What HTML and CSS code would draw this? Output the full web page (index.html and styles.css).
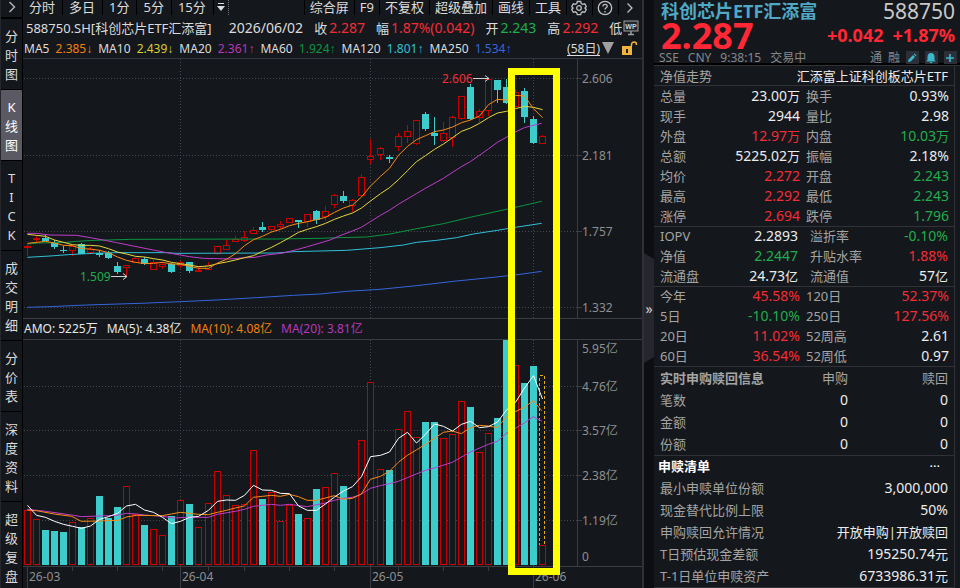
FILE: index.html
```html
<!DOCTYPE html>
<html lang="zh-CN">
<head>
<meta charset="utf-8">
<title>588750.SH 科创芯片ETF汇添富</title>
<link rel="stylesheet" href="styles.css">
</head>
<body>
<div class="app">
  <nav class="side">
    <button class="side-toggle" aria-label="展开"><svg width="8" height="12" viewBox="0 0 8 12"><path d="M1.5 1 6.500 6 1.500 11" /></svg></button>
    <button>分<br>时<br>图</button>
    <button class="active">K<br>线<br>图</button>
    <button>T<br>I<br>C<br>K</button>
    <button>成<br>交<br>明<br>细</button>
    <button>分<br>价<br>表</button>
    <button>深<br>度<br>资<br>料</button>
    <button>超<br>级<br>复<br>盘</button>
  </nav>

  <main class="main">
    <div class="toolbar">
      <div class="periods">
        <button>分时</button><button>多日</button><button>1分</button><button>5分</button><button>15分</button>
        <button class="more" aria-label="更多周期"><svg width="8" height="9" viewBox="0 0 8 9"><path d="M1 0h6v1H1zM0 3h8L4 8z" /></svg></button>
      </div>
      <div class="tools">
        <button>综合屏</button><button>F9</button><button>不复权</button><button>超级叠加</button><button>画线</button><button>工具</button>
        <button class="icon" aria-label="设置"><svg width="16" height="16" viewBox="0 0 16 16"><path d="M6.300 1.500h3.400l.6 2 1.400.8 2-.5 1.600 2.800-1.400 1.400 1.400 1.500-1.600 2.800-2-.5-1.400.8-.6 2H6.300l-.6-2-1.400-.8-2 .5L.7 9.500 2.100 8 .7 6.600l1.600-2.800 2 .5 1.400-.8z" /><circle cx="8" cy="8" r="2.300" /></svg></button>
        <button class="icon" aria-label="帮助"><svg width="16" height="16" viewBox="0 0 16 16"><circle cx="8" cy="8" r="6.700" /><path d="M6 6.500C6 3.600 10.200 3.800 10.200 6.300 10.200 7.900 8 7.800 8 9.600M8 11v1.400" /></svg></button>
        <button class="icon" aria-label="下一页"><svg width="8" height="16" viewBox="0 0 8 16"><path d="M1.500 3.500 6 8l-4.500 4.500" /></svg></button>
      </div>
    </div>

    <div class="quote">
      <span class="code">588750.SH[科创芯片ETF汇添富]</span>
      <span class="num">2026/06/02</span>
      <span>收<b class="up">2.287</b></span>
      <span>幅<b class="up">1.87%(0.042)</b></span>
      <span>开<b class="down">2.243</b></span>
      <span>高<b class="up">2.292</b></span>
      <span>低</span>
      <svg class="wp" width="16" height="16" viewBox="0 0 16 16"><rect x="1" y="1" width="14" height="10" /><path d="M5 14.500h6M8 11v3" /><text x="8" y="9">WP</text></svg>
    </div>
    <div class="averages">
      <span>MA5 <i class="c-orange">2.385<s>↓</s></i></span>
      <span>MA10 <i class="c-yellow">2.439<s>↓</s></i></span>
      <span>MA20 <i class="c-purple">2.361<s>↑</s></i></span>
      <span>MA60 <i class="c-green">1.924<s>↑</s></i></span>
      <span>MA120 <i class="c-cyan">1.801<s>↑</s></i></span>
      <span>MA250 <i class="c-blue">1.534<s>↑</s></i></span>
      <div class="range">
        <a href="#range">(58日)</a>
        <svg width="12" height="12" viewBox="0 0 12 12"><path d="M0 0h12L6 12z" fill="#a0a0a0" /></svg>
        <svg class="lock" width="16" height="14" viewBox="0 0 16 14"><path d="M0 5h10v9H0z" fill="#f0b33c" /><path d="M9.500 5V3.500a2.500 2.500 0 0 1 5 0V4" fill="none" stroke="#f0b33c" stroke-width="1.500" /><path d="M4 8h2v4H4z" fill="#222" /></svg>
      </div>
    </div>

    <div class="charts">
      <svg id="price" viewBox="23 59 619 259"></svg>
      <div class="amo">
        <span>AMO: 5225万</span><span>MA(5): 4.38亿</span><span class="c-orange">MA(10): 4.08亿</span><span class="c-purple">MA(20): 3.81亿</span>
      </div>
      <svg id="volume" viewBox="23 340 619 248"></svg>
      <div class="highlight"></div>
    </div>
  </main>

  <div class="splitter"><button aria-label="收起">»</button></div>

  <aside class="panel">
    <header class="head">
      <div class="line"><h1>科创芯片ETF汇添富</h1><span class="ticker">588750</span></div>
      <div class="line price-line"><strong class="last">2.287</strong><span class="change"><b>+0.042</b><b>+1.87%</b></span></div>
      <div class="line status">
        <span class="tags"><span>SSE</span><span>CNY</span><span>9:38:15</span><span>交易中</span></span>
        <span class="marks"><span>通</span><span>融</span>
          <button aria-label="编辑"><svg width="12" height="12" viewBox="0 0 12 12"><path d="M2 10l.6-2.600L7 3l2 2-4.400 4.400zM7.700 2.300l.8-.8 2 2-.8.800z" /></svg></button>
          <button aria-label="提醒"><svg width="12" height="12" viewBox="0 0 12 12"><path d="M6 1c2.500 0 3.500 1.800 3.500 4v3l1 1v.600h-9V9l1-1V5C2.500 2.800 3.500 1 6 1zM4.500 10h3l-.7 1H5.200z" /></svg></button>
          <button aria-label="添加"><svg width="12" height="12" viewBox="0 0 12 12"><path d="M5.200 2h1.600v3.200H10v1.600H6.800V10H5.200V6.800H2V5.200h3.200z" /></svg></button>
        </span>
      </div>
    </header>
    <div class="body">
      <div class="line trend"><span>净值走势</span><span class="white">汇添富上证科创板芯片ETF</span></div>
      <table class="pairs">
        <tr><th>总量</th><td>23.00<u>万</u></td><th>换手</th><td>0.93%</td></tr>
        <tr><th>现手</th><td>2944</td><th>量比</th><td>2.98</td></tr>
        <tr><th>外盘</th><td class="up">12.97<u>万</u></td><th>内盘</th><td class="down">10.03<u>万</u></td></tr>
        <tr><th>总额</th><td>5225.02<u>万</u></td><th>振幅</th><td>2.18%</td></tr>
        <tr><th>均价</th><td class="up">2.272</td><th>开盘</th><td class="down">2.243</td></tr>
        <tr><th>最高</th><td class="up">2.292</td><th>最低</th><td class="down">2.243</td></tr>
        <tr><th>涨停</th><td class="up">2.694</td><th>跌停</th><td class="down">1.796</td></tr>
      </table>
      <table class="pairs inset">
        <tr><th>IOPV</th><td>2.2893</td><th>溢折率</th><td class="down">-0.10%</td></tr>
        <tr><th>净值</th><td class="down">2.2447</td><th>升贴水率</th><td class="up">1.88%</td></tr>
        <tr><th>流通盘</th><td>24.73<u>亿</u></td><th>流通值</th><td>57<u>亿</u></td></tr>
      </table>
      <table class="pairs">
        <tr><th>今年</th><td class="up">45.58%</td><th>120日</th><td class="up">52.37%</td></tr>
        <tr><th>5日</th><td class="down">-10.10%</td><th>250日</th><td class="up">127.56%</td></tr>
        <tr><th>20日</th><td class="up">11.02%</td><th>52周高</th><td>2.61</td></tr>
        <tr><th>60日</th><td class="up">36.54%</td><th>52周低</th><td>0.97</td></tr>
      </table>
      <table class="flows">
        <tr><th class="strong">实时申购赎回信息</th><th class="r">申购</th><th class="r">赎回</th></tr>
        <tr><th>笔数</th><td>0</td><td>0</td></tr>
        <tr><th>金额</th><td>0</td><td>0</td></tr>
        <tr><th>份额</th><td>0</td><td>0</td></tr>
      </table>
      <div class="line list-head"><h2>申赎清单</h2><button aria-label="更多">···</button></div>
      <table class="list">
        <tr><th>最小申赎单位份额</th><td>3,000,000</td></tr>
        <tr><th>现金替代比例上限</th><td>50%</td></tr>
        <tr><th>申购赎回允许情况</th><td><u>开放申购|开放赎回</u></td></tr>
        <tr><th>T日预估现金差额</th><td>195250.74<u>元</u></td></tr>
        <tr><th>T-1日单位申赎资产</th><td>6733986.31<u>元</u></td></tr>
      </table>
    </div>
  </aside>
</div>
<script src="script.js"></script>
</body>
</html>
```
FILE: styles.css
```css
* { box-sizing: border-box; }
body {
  margin: 0;
  background: #14171c;
  color: #dcdcdc;
  font: 13px/19px "Noto Sans", "Noto Sans CJK SC", sans-serif;
  overflow: hidden;
}
button {
  margin: 0;
  padding: 0;
  border: 0;
  background: none;
  color: inherit;
  font: inherit;
  white-space: nowrap;
}
svg { display: block; }
b, i, s, u { font-weight: normal; font-style: normal; text-decoration: none; }

.app {
  display: grid;
  grid-template-columns: 23px minmax(0, 1fr) 12px 306px;
  height: 100vh;
  overflow: hidden;
}

/* left tabs */
.side {
  display: flex;
  flex-direction: column;
  border-left: 1px solid #25272c;
  border-right: 1px solid #000;
}
.side button {
  flex: none;
  padding: 8px 0 5px;
  border-bottom: 1px solid #000;
}
.side .side-toggle {
  display: flex;
  justify-content: center;
  height: 19px;
  padding: 1px 0 0;
  border-bottom-width: 2px;
}
.side-toggle svg { fill: none; stroke: #b0b0b0; stroke-width: 1.5; }
.side .active { background: #5a5964; color: #fff; }

/* toolbar */
.toolbar {
  display: flex;
  justify-content: space-between;
  height: 17px;
}
.periods, .tools { display: flex; }
.toolbar button {
  height: 15px;
  line-height: 15px;
  padding: 0 7px 0 6px;
  border-right: 1px solid #000;
}
.tools button { padding: 0 5px; }
.tools button:first-child { border-left: 1px solid #000; }
.tools button:last-child { border-right: 0; padding: 0 8px 0 7px; }
.toolbar .more { padding: 0 3px; border-right: 1px dotted #777; }
.more svg { fill: #dcdcdc; }
.icon svg { fill: none; stroke: #c0c0c0; stroke-width: 1.3; }
.tools .icon { padding: 0 5px 0 4px; }

/* quote rows */
.quote, .averages {
  position: relative;
  display: flex;
  white-space: nowrap;
}
.quote { height: 22px; line-height: 22px; gap: 11px; padding-left: 3px; }
.quote .num { font-size: 14px; margin-left: 6px; }
.quote b { font-size: 14px; margin-left: 2px; }
.wp { position: absolute; right: 3px; top: 3px; }
.wp rect { fill: #26282d; stroke: #a0a0a0; }
.wp path { stroke: #a0a0a0; stroke-width: 1.5; }
.wp text { fill: #d0d0d0; font: bold 7px "Liberation Sans", sans-serif; text-anchor: middle; }
.averages {
  height: 20px;
  gap: 6px;
  padding-left: 1px;
  border-bottom: 1px solid #33353c;
  font-size: 12px;
  line-height: 19px;
}
.averages i { margin-left: 3px; }
.averages s { font-family: "Liberation Sans", sans-serif; }
.range { display: flex; gap: 2px; margin-left: auto; padding-right: 4px; }
.range svg { margin-top: 3px; }
.range .lock { margin: 2px 0 0 6px; }
.range a { color: inherit; text-underline-offset: 2px; }

.up { color: #f42c36; }
.down { color: #1fae4b; }
.c-orange { color: #f08010; }
.c-yellow { color: #d6cf30; }
.c-purple { color: #b838b8; }
.c-green { color: #0c9440; }
.c-cyan { color: #30c0d8; }
.c-blue { color: #3565dc; }

/* charts */
.charts { position: relative; }
.charts svg { width: 100%; height: auto; }
.amo {
  display: flex;
  gap: 9px;
  height: 22px;
  padding-left: 1px;
  border-top: 1px solid #3a3c42;
  border-bottom: 1px solid #3a3c42;
  font-size: 12px;
  line-height: 20px;
  white-space: nowrap;
  color: #e8e8e8;
}
.amo .c-orange { color: #f08010; }
.amo .c-purple { color: #b838b8; }
.highlight {
  position: absolute;
  left: 78.35%;
  top: 9px;
  width: 8.4%;
  height: 507px;
  border: 7px solid #ff0;
}
.charts text { font-size: 12px; fill: #8f8f8f; dominant-baseline: central; }
.charts .t-low { fill: #1fae4b; }
.charts .t-high { fill: #f42c36; }
.grid { stroke: #45484e; stroke-dasharray: 1 2; }
.axis { stroke: #3a3c42; }
.grid, .axis, .wick-up, .wick-down, .bar-up, .bar-down, .estimate { shape-rendering: crispEdges; }
.wick-up { stroke: #c80000; }
.wick-down { stroke: #3ccccc; }
.bar-up { fill: #14171c; stroke: #c80000; }
.bar-down { fill: #3ccccc; }
.estimate { fill: #14171c; stroke: #e8ac10; stroke-dasharray: 3 2; }
.curve { fill: none; stroke-width: 1; }
.arrow { fill: none; stroke: #d0d0d0; }

/* splitter */
.splitter {
  display: flex;
  align-items: center;
  border-left: 2px solid #303038;
  background: #0c0e12;
  padding-top: 24px;
}
.splitter button {
  width: 10px;
  height: 110px;
  background: #26262d;
  clip-path: polygon(0 0, 100% 6px, 100% 104px, 0 100%);
  color: #d0d0d0;
  font-size: 14px;
}

/* right panel */
.line { display: flex; justify-content: space-between; }
.head {
  height: 66px;
  padding: 0 5px 0 7px;
  border-bottom: 1px solid #303238;
  box-shadow: inset 0 -2px #000;
}
h1 { margin: 0; color: #50a8c4; font-size: 18px; line-height: 22px; }
.ticker { font-size: 21px; line-height: 22px; color: #c8c8c8; }
.price-line { height: 28px; color: #ff2834; }
.last { font-size: 36px; line-height: 28px; }
.change { display: flex; gap: 9px; font-size: 18px; line-height: 27px; }
.change b { font-weight: bold; }
.status { height: 15px; line-height: 15px; font-size: 12px; color: #85888c; margin-left: -2px; margin-right: -2px; }
.tags { display: flex; gap: 9px; }
.marks { display: flex; gap: 6px; align-items: center; }
.marks button { width: 13px; height: 13px; background: #2c2f37; }
.marks svg { fill: #3cb8cc; }

.body { margin-right: 5px; border-right: 1px solid #303238; color: #a4a4a2; }
.trend { height: 20px; padding: 0 6px; line-height: 20px; border-bottom: 1px solid #303238; }
.white { color: #ececec; }
table {
  width: 100%;
  border-collapse: separate;
  border-spacing: 0;
  table-layout: fixed;
  border-bottom: 1px solid #303238;
}
th { padding: 0; font-weight: normal; text-align: left; white-space: nowrap; }
td { padding: 0; color: #ececec; font-size: 14px; text-align: right; white-space: nowrap; }
td.up { color: #f42c36; }
td.down { color: #1fae4b; }
u { font-size: 13px; }
tr > :first-child { padding-left: 6px; }
tr > :last-child { padding-right: 5px; }
.pairs { margin-bottom: -1px; }
.pairs tr { height: 20px; line-height: 20px; }
.pairs th:nth-child(3) { padding-left: 6px; }
.pairs th:first-child { width: 60px; }
.pairs td:nth-child(2) { width: 86px; }
.inset td:nth-child(2) { padding-right: 2px; }
.inset th:nth-child(3) { padding-left: 10px; }
.inset td:last-child { padding-right: 6px; }
.flows tr, .list tr { height: 22px; line-height: 22px; }
.flows { padding-top: 1px; }
.flows th:first-child { width: 50%; }
.flows .r { text-align: right; }
.flows tr > :nth-child(2) { padding-right: 5px; width: 49px; }
.strong { font-weight: bold; }
.flows tr > :last-child, .list tr > :last-child { padding-right: 6px; }
.list-head { height: 21px; padding: 0 14px 0 4px; line-height: 21px; color: #fff; }
h2 { margin: 0; font-size: 13px; line-height: 21px; }
.list th { width: 50%; }
```
FILE: script.js
```js
// Chart values are kept in thirds of a viewBox unit.
const candles = [
  ['u',556,558,560,588],['u',524,534,540,548],['d',524,534,544,544],['d',540,546,561,567],['d',557,569,573,579],
  ['u',556,558,572,588],['d',549,552,583,583],['u',560,566,578,578],['d',570,579,584,591],['d',574,579,594,597],
  ['d',606,618,636,642],['u',615,616,623,647],['u',590,595,609,609],['d',592,597,611,615],['u',596,606,629,629],
  ['u',607,611,620,627],['d',608,612,636,639],['u',603,606,617,624],['d',606,606,633,639],['u',619,629,632,632],
  ['u',606,614,629,629],['u',558,559,581,585],['u',540,556,569,569],['u',528,538,545,545],['u',514,532,543,545],
  ['u',501,511,521,521],['d',486,501,510,516],['u',498,499,509,516],['u',483,493,500,506],['u',474,475,488,488],
  ['d',480,480,486,503],['u',462,463,487,501],['d',450,453,479,491],['u',438,454,470,483],['u',402,406,434,444],
  ['d',393,408,423,429],['u',417,421,437,456],['u',342,352,407,411],['u',238,289,299,311],['u',261,265,284,300],
  ['d',285,291,297,309],['u',219,229,260,273],['u',195,214,230,249],['u',180,181,251,255],['d',156,162,207,213],
  ['d',171,219,228,255],['u',186,220,243,245],['u',168,172,233,261],['u',108,109,177,179],['d',72,81,177,180],
  ['u',147,154,173,189],['u',57,58,152,168],['d',60,60,90,129],['d',57,81,129,132],['u',87,97,142,142],
  ['d',84,93,171,188],['d',168,177,249,252],['u',225,229,251,251]
];
const volumes = [585,613,645,648,651,622,636,610,543,609,576,514,598,630,643,660,603,556,567,637,565,469,541,571,568,406,
  553,532,619,571,597,610,522,517,475,513,547,376,202,463,465,343,289,367,321,321,370,358,259,276,412,355,309,75,151,204,153,691];

// One value per trading day.
const daily = {
  ma5: [550,547,544,549,556,557,566,567,571,578,591,601,607,611,610,607,612,613,619,625,625,609,598,581,557,539,529,516,508,
    497,490,485,479,472,457,444,435,411,378,349,325,286,259,239,227,215,210,201,188,180,168,134,118,120,106,108,146,173],
  ma10: [523,526,529,540,547,554,556,556,558,566,576,582,589,591,596,600,607,611,615,620,618,611,606,600,593,587,574,562,548,
    533,517,508,500,490,478,468,459,444,423,401,383,359,332,305,287,268,252,233,214,204,190,173,159,154,146,139,142,149],
  v5: [571,601,607,619,628,634,640,633,613,605,595,573,568,585,592,607,626,619,607,604,586,559,555,556,541,511,525,526,535,
    536,573,586,586,567,546,528,515,485,425,421,411,370,352,384,358,327,334,348,328,319,338,335,321,285,262,219,182,252]
};
// [x, y] vertices for the slower averages.
const sparse = {
  ma20: [[82,520],[109,520],[150,525],[230,526],[271,533],[310,540],[350,548],[400,558],[460,570],[500,578],[541,585],[568,590],
    [610,595],[652,596],[690,597],[725,594],[765,592],[800,585],[850,579],[890,569],[922,560],[960,549],[990,540],[1020,527],
    [1057,513],[1084,502],[1111,485],[1141,466],[1168,451],[1195,433],[1249,401],[1276,385],[1330,355],[1384,320],[1411,305],
    [1465,267],[1492,247],[1519,232],[1546,216],[1573,203],[1600,196],[1625,190]],
  ma60: [[82,552],[115,549],[200,547],[230,544],[285,541],[395,538],[830,537],[960,535],[1015,533],[1100,531],[1170,522],
    [1230,510],[1330,491],[1410,472],[1519,448],[1573,436],[1625,424]],
  ma120: [[82,592],[150,588],[205,584],[280,580],[340,578],[500,578],[530,580],[830,579],[880,575],[960,573],[1040,571],
    [1140,563],[1210,555],[1250,547],[1310,541],[1370,533],[1420,522],[1492,511],[1546,502],[1625,490]],
  ma250: [[82,742],[150,740],[260,735],[420,730],[541,725],[650,720],[770,713],[880,706],[960,702],[1040,694],[1140,688],
    [1250,677],[1360,664],[1480,652],[1560,643],[1625,634]],
  v10: [[82,585],[109,587],[163,597],[215,604],[244,619],[290,618],[355,616],[379,606],[410,601],[487,602],[514,597],[541,592],
    [568,595],[595,598],[625,599],[652,592],[679,586],[706,579],[733,573],[760,547],[787,544],[814,541],[841,544],[868,538],
    [895,545],[922,556],[949,556],[976,549],[1003,542],[1030,553],[1057,550],[1084,537],[1111,493],[1141,484],[1168,469],
    [1195,442],[1222,421],[1249,405],[1276,388],[1303,370],[1330,352],[1357,348],[1384,356],[1411,338],[1438,331],[1465,333],
    [1492,338],[1519,306],[1546,290],[1573,277],[1600,257],[1625,287]],
  v20: [[82,583],[130,588],[180,595],[220,601],[244,605],[350,601],[379,595],[410,597],[433,600],[487,604],[520,609],[560,607],
    [625,607],[652,598],[706,589],[733,583],[760,574],[814,568],[841,571],[868,568],[922,575],[976,564],[1003,556],[1030,550],
    [1057,547],[1084,538],[1111,520],[1141,512],[1168,506],[1195,499],[1222,488],[1249,477],[1276,466],[1303,459],[1357,442],
    [1411,411],[1465,388],[1492,379],[1519,355],[1546,340],[1573,324],[1600,305],[1625,318]]
};

const dayX = i => i < 20 ? 27 + 9 * i : i < 39 ? 208 + 9 * (i - 20) : 380 + 9 * (i - 39);
const scale = top => v => top + Math.round(v / 3);
const line = (cls, x1, y1, x2, y2) => `<line class="${cls}" x1="${x1}" y1="${y1}" x2="${x2}" y2="${y2}"/>`;
const text = (x, y, s, cls = '') => `<text class="${cls}" x="${x}" y="${y}">${s}</text>`;
const curve = (points, color) => `<polyline class="curve" stroke="${color}" points="${points.map(p => p.join()).join(' ')}"/>`;
const fromDaily = (vals, top) => vals.map((v, i) => [dayX(i) + 0.5, top + v / 3]);
const fromSparse = (pts, top) => pts.map(([x, y]) => [x / 3, top + y / 3]);
const months = [180, 370, 533];

function body(kind, x, top, bottom) {
  if (kind === 'd') return `<rect class="bar-down" x="${x - 3}" y="${top}" width="7" height="${Math.max(1, bottom - top)}"/>`;
  return `<rect class="bar-up" x="${x - 2.5}" y="${top + 0.5}" width="6" height="${Math.max(1, bottom - top - 1)}"/>`;
}

function drawPrice() {
  const y = scale(60);
  let out = '';
  [[78, '2.606'], [155, '2.181'], [231, '1.757'], [307, '1.332']].forEach(([gy, label]) => {
    out += line('grid', 24, gy + 0.5, 577, gy + 0.5) + line('axis', 577, gy + 0.5, 582, gy + 0.5) + text(582, gy, label);
  });
  months.forEach(x => { out += line('grid', x + 0.5, 59, x + 0.5, 318); });
  out += line('axis', 577.5, 59, 577.5, 318);
  candles.forEach(([kind, hi, top, bottom, lo], i) => {
    const x = dayX(i);
    out += line(kind === 'u' ? 'wick-up' : 'wick-down', x + 0.5, y(hi), x + 0.5, y(lo)) + body(kind, x, y(top), y(bottom));
  });
  out += curve(fromSparse(sparse.ma250, 60), '#3565dc') + curve(fromSparse(sparse.ma120, 60), '#30c0d8')
    + curve(fromSparse(sparse.ma60, 60), '#0c9440') + curve(fromSparse(sparse.ma20, 60), '#c03cc8')
    + curve(fromDaily(daily.ma10, 60), '#e6d83c') + curve(fromDaily(daily.ma5, 60), '#fa8a14');
  out += text(80, 276, '1.509', 't-low') + '<path class="arrow" d="M111 276.500H127M123 273.500l4 3-4 3"/>';
  out += text(442, 78, '2.606', 't-high') + '<path class="arrow" d="M473 78.500H489M485 75.500l4 3-4 3"/>';
  document.getElementById('price').innerHTML = out;
}

function drawVolume() {
  const y = scale(315);
  let out = '';
  [[386, '4.76亿'], [430, '3.57亿'], [475, '2.38亿'], [520, '1.19亿']].forEach(([gy, label]) => {
    out += line('grid', 24, gy + 0.5, 577, gy + 0.5) + line('axis', 577, gy + 0.5, 582, gy + 0.5) + text(582, gy, label);
  });
  out += text(582, 348, '5.95亿') + text(582, 556, '0');
  months.forEach(x => { out += line('grid', x + 0.5, 340, x + 0.5, 566) + line('axis', x + 0.5, 566, x + 0.5, 588); });
  out += line('axis', 27.5, 566, 27.5, 588) + line('axis', 577.5, 340, 577.5, 566) + line('axis', 23, 566.5, 642, 566.5);
  [72, 117, 162, 208, 244, 289, 334, 398, 443, 488].forEach(x => { out += line('axis', x + 0.5, 566, x + 0.5, 571); });
  [[29, '26-03'], [182, '26-04'], [372, '26-05'], [535, '26-06']].forEach(([x, s]) => { out += text(x, 576, s); });
  out += '<rect class="estimate" x="539.5" y="375.5" width="5" height="170"/>';
  volumes.forEach((v, i) => { out += body(candles[i][0], dayX(i), y(v), 565); });
  out += curve(fromSparse(sparse.v20, 315), '#c03cc8') + curve(fromSparse(sparse.v10, 315), '#fa8a14')
    + curve(fromDaily(daily.v5, 315), '#fff');
  document.getElementById('volume').innerHTML = out;
}

drawPrice();
drawVolume();
```
